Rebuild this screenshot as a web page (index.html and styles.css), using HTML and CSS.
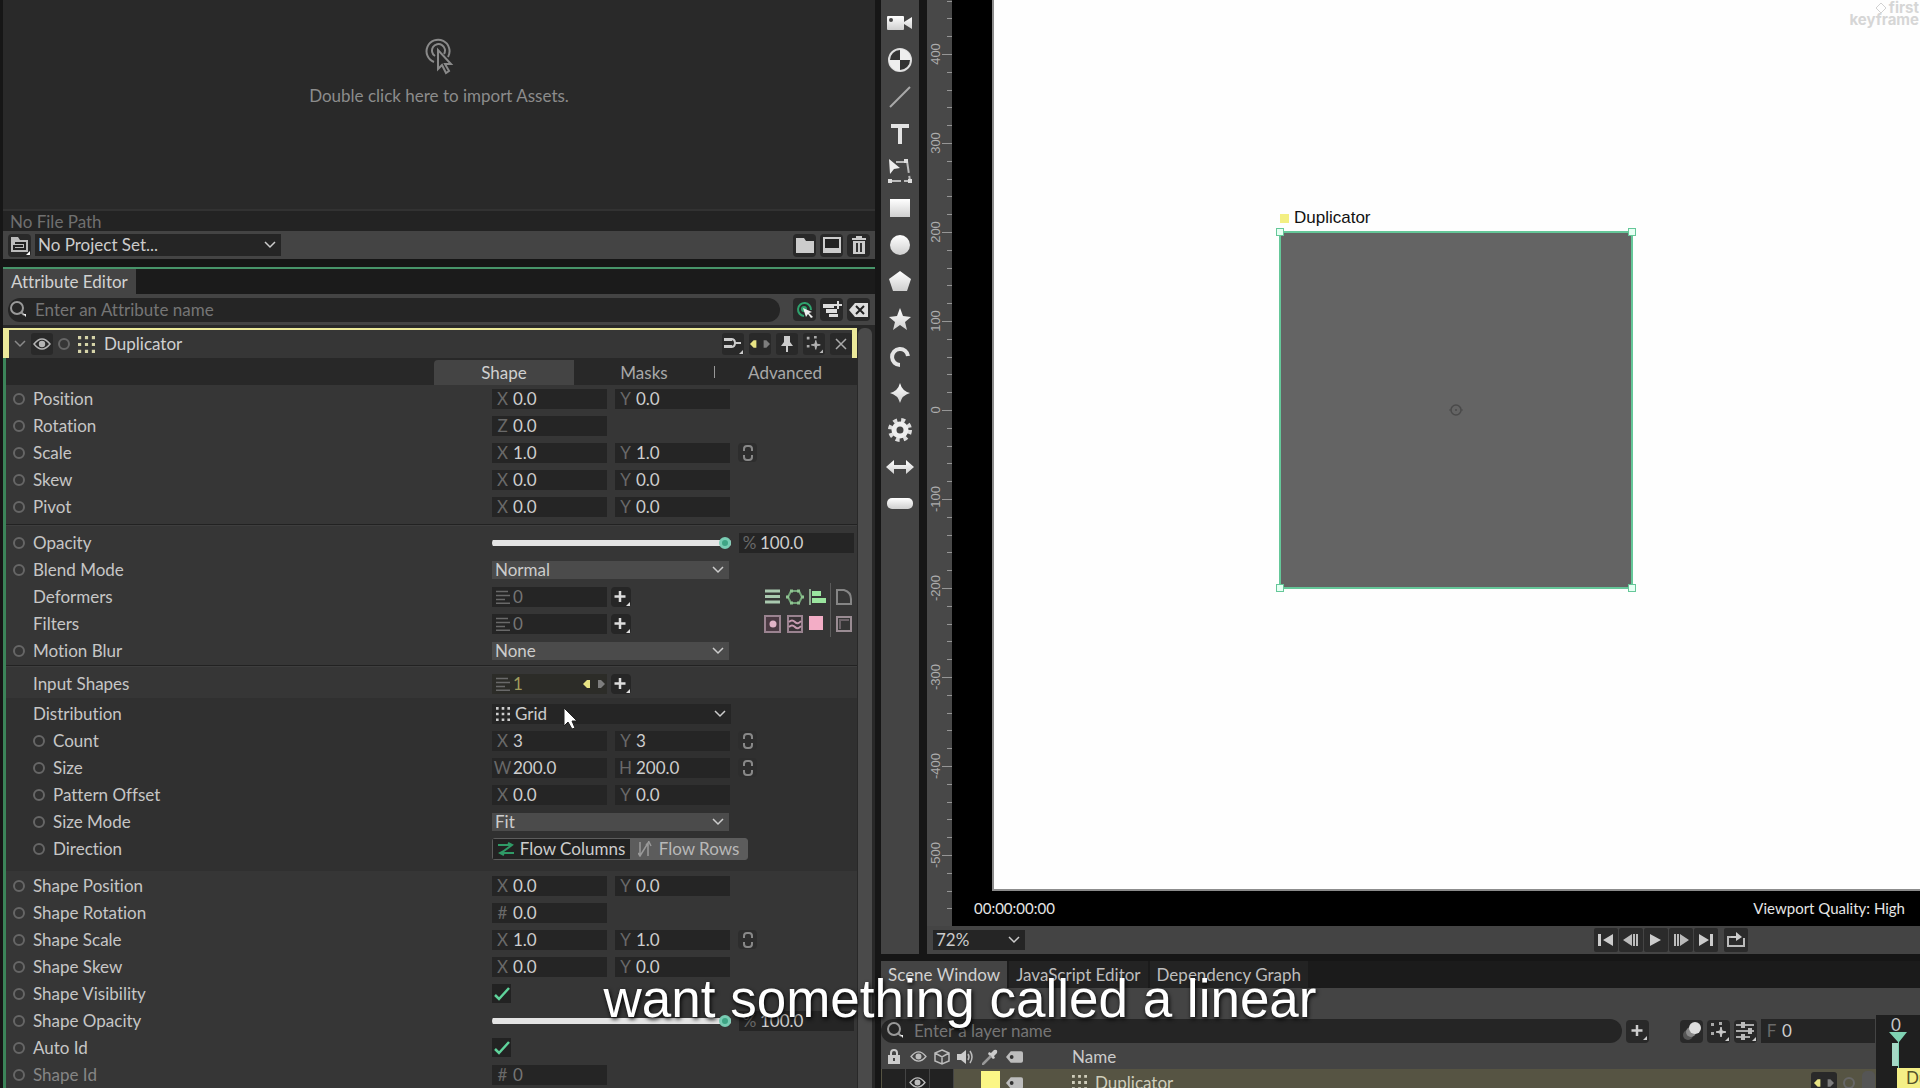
FILE: index.html
```html
<!DOCTYPE html>
<html lang="en">
<head>
<meta charset="utf-8">
<title>Attribute Editor</title>
<link rel="stylesheet" href="styles.css">
</head>
<body>
<svg class="defs" aria-hidden="true">
  <defs>
    <linearGradient id="shine" x1="0" y1="0" x2="0" y2="1"><stop offset="0" stop-color="#fff"/><stop offset="1" stop-color="#cfcfcf"/></linearGradient>
  </defs>
  <symbol id="search" viewBox="0 0 20 20"><circle cx="8" cy="8" r="6" fill="none" stroke="currentColor" stroke-width="2"/><path d="M12 12l3 3" stroke="currentColor" stroke-width="2"/><path d="M14 14h3v3z" fill="#eee"/></symbol>
  <symbol id="plus" viewBox="0 0 20 20"><path d="M9 4v11M3.500 9.500h11" stroke="currentColor" stroke-width="2.500"/><path d="M19 15v4h-4z" fill="currentColor"/></symbol>
  <symbol id="chev" viewBox="0 0 12 8"><path d="M1 1l5 5 5-5" fill="none" stroke="currentColor" stroke-width="1.500"/></symbol>
  <symbol id="eye" viewBox="0 0 18 14"><path d="M1 7Q9-3 17 7Q9 17 1 7z" fill="none" stroke="currentColor" stroke-width="1.500"/><circle cx="9" cy="7" r="3.200" fill="currentColor"/></symbol>
  <symbol id="dots" viewBox="0 0 16 16"><path d="M0 0h3v3H0zM6.500 0h3v3h-3zM13 0h3v3h-3zM0 6.500h3v3H0zM6.500 6.500h3v3h-3zM13 6.500h3v3h-3zM0 13h3v3H0zM6.500 13h3v3h-3zM13 13h3v3h-3z" fill="currentColor"/></symbol>
  <symbol id="list" viewBox="0 0 14 14"><path d="M0 1.500h12M0 5.500h14M0 9.500h9M0 13.200h14" stroke="currentColor" stroke-width="1.400"/></symbol>
  <symbol id="link" viewBox="0 0 10 16"><path d="M1 6V4a3 3 0 0 1 3-3h2a3 3 0 0 1 3 3v2M1 10v2a3 3 0 0 0 3 3h2a3 3 0 0 0 3-3v-2" fill="none" stroke="currentColor" stroke-width="2"/></symbol>
  <symbol id="io" viewBox="0 0 22 10"><path d="M0 5l4-4h3v8H4z" fill="#e8e384"/><path d="M22 5l-4-4h-3v8h3z" fill="#7d7d7d"/></symbol>
  <symbol id="tag" viewBox="0 0 18 12"><path d="M5 0h11q2 0 2 2v8q0 2-2 2H5L0 6z" fill="currentColor"/><circle cx="6" cy="6" r="2" fill="#333"/></symbol>
  <symbol id="scatter" viewBox="0 0 20 20"><path d="M2 2h3v3H2zM10 1h3v3h-3zM2 11h3v3H2z" fill="#aaa"/><path d="M12 6l1 4 4 1-4 1-1 4-1-4-4-1 4-1z" fill="currentColor" stroke="currentColor"/><path d="M20 16v4h-4z" fill="currentColor"/></symbol>
</svg>
<div class="app">
  <aside class="side">
    <section class="assets">
      <button class="drop">
        <svg width="30" height="38" viewBox="0 0 30 38" fill="none" stroke="#8a8a8a" stroke-width="2"><path d="M10 24A11.500 11.500 0 1 1 24 19M11 18a6.500 6.500 0 1 1 9-2"/><path d="M14 12v19l4-4 4 8 3-2-4-7h6z" fill="#292929"/></svg>
        <span>Double click here to import Assets.</span>
      </button>
      <div class="path">No File Path</div>
      <div class="bar">
        <button class="ib" aria-label="Project"><svg width="20" height="20" viewBox="0 0 20 20"><path d="M1 2h7l2 3h8v12H1z" fill="#bbb"/><path d="M5 8h10v6H4v-3h9" fill="none" stroke="#222" stroke-width="2"/><path d="M20 16v4h-4z" fill="#fff"/></svg></button>
        <div class="sel wide"><select aria-label="Project set"><option>No Project Set...</option></select><svg width="12" height="8"><use href="#chev"/></svg></div>
        <span class="grow"></span>
        <button class="ib" aria-label="Folder"><svg width="20" height="18" viewBox="0 0 20 18"><path d="M1 2h8l2 3h8v12H1z" fill="#ccc"/></svg></button>
        <button class="ib" aria-label="Composition"><svg width="20" height="18" viewBox="0 0 20 18"><path d="M2 2h16v14H2z" fill="#222" stroke="#ccc" stroke-width="2"/><path d="M2 12h16v4H2z" fill="#ccc"/></svg></button>
        <button class="ib" aria-label="Delete"><svg width="16" height="20" viewBox="0 0 16 20"><path d="M1 3h14v2H1zM5 1h6v2H5zM2 6h12v13H2z" fill="#ccc"/><path d="M6 8v9M10 8v9" stroke="#333" stroke-width="2"/></svg></button>
      </div>
    </section>

    <section class="attrs">
      <div class="tabs top"><button class="tab on">Attribute Editor</button></div>
      <div class="bar find">
        <label class="search"><svg width="20" height="20"><use href="#search"/></svg><input type="text" aria-label="Attribute name" placeholder="Enter an Attribute name"></label>
        <button class="ib" aria-label="Follow selection"><svg width="20" height="20" viewBox="0 0 20 20"><path d="M9 16a6.500 6.500 0 1 1 7-6" fill="none" stroke="#2fa36e" stroke-width="2"/><circle cx="9" cy="9" r="3" fill="#2fa36e"/><path d="M8 8l9 4-3 1 4 4-2 1-3-4-2 3z" fill="#eee"/></svg></button>
        <button class="ib" aria-label="Add to list"><svg width="20" height="18" viewBox="0 0 20 18"><path d="M1 3h11v4H1zM4 8h11v4H4zM7 13h9v3H7z" fill="#ddd"/><path d="M16 0v8M12 4h8" stroke="#ddd" stroke-width="2"/></svg></button>
        <button class="ib" aria-label="Clear"><svg width="20" height="16" viewBox="0 0 20 16"><path d="M6 1h13v14H6L0 8z" fill="#ddd"/><path d="M7 4l8 8M15 4l-8 8" stroke="#222" stroke-width="2"/></svg></button>
      </div>
      <div class="scroller">
        <div class="sheet">
          <header class="head">
            <button class="bare" aria-label="Collapse"><svg class="dim" width="12" height="8"><use href="#chev"/></svg></button>
            <button class="mini" aria-label="Visible"><svg width="18" height="14"><use href="#eye"/></svg></button>
            <button class="ring" aria-label="Keyframe"></button>
            <svg class="cream" width="17" height="17"><use href="#dots"/></svg>
            <h2>Duplicator</h2>
            <span class="grow"></span>
            <button class="mini" aria-label="Presets"><svg width="20" height="20" viewBox="0 0 20 20"><path d="M1 5.500h8M1 12.500h8" stroke="#ccc" stroke-width="3"/><path d="M8 5q4 0 4 4t-4 4M12 9h6" fill="none" stroke="#ccc" stroke-width="2"/><path d="M20 16v4h-4z" fill="#ccc"/></svg></button>
            <button class="mini" aria-label="Connections"><svg width="20" height="10"><use href="#io"/></svg></button>
            <button class="mini" aria-label="Pin"><svg width="14" height="18" viewBox="0 0 14 18"><path d="M4 1h6v6l3 4H1l3-4zM6 11h2v6H6z" fill="#ccc"/></svg></button>
            <button class="mini" aria-label="Scatter"><svg width="18" height="18"><use href="#scatter"/></svg></button>
            <button class="mini" aria-label="Close"><svg width="14" height="14" viewBox="0 0 14 14"><path d="M2 2l10 10M12 2L2 12" stroke="#aaa" stroke-width="1.500"/></svg></button>
          </header>
          <nav class="subtabs"><button class="on">Shape</button><button>Masks</button><i></i><button>Advanced</button></nav>

          <div class="group first">
            <div class="row"><div class="name"><button class="ring" aria-label="Key"></button>Position</div><label class="f"><span>X</span><input value="0.0"></label><label class="f"><span>Y</span><input value="0.0"></label></div>
            <div class="row"><div class="name"><button class="ring" aria-label="Key"></button>Rotation</div><label class="f"><span>Z</span><input value="0.0"></label></div>
            <div class="row"><div class="name"><button class="ring" aria-label="Key"></button>Scale</div><label class="f"><span>X</span><input value="1.0"></label><label class="f"><span>Y</span><input value="1.0"></label><button class="lk" aria-label="Link"><svg width="10" height="16"><use href="#link"/></svg></button></div>
            <div class="row"><div class="name"><button class="ring" aria-label="Key"></button>Skew</div><label class="f"><span>X</span><input value="0.0"></label><label class="f"><span>Y</span><input value="0.0"></label></div>
            <div class="row"><div class="name"><button class="ring" aria-label="Key"></button>Pivot</div><label class="f"><span>X</span><input value="0.0"></label><label class="f"><span>Y</span><input value="0.0"></label></div>
          </div>

          <div class="group line">
            <div class="row"><div class="name"><button class="ring" aria-label="Key"></button>Opacity</div><input class="slider" type="range" aria-label="Opacity" value="100"><label class="f"><span>%</span><input value="100.0"></label></div>
            <div class="row"><div class="name"><button class="ring" aria-label="Key"></button>Blend Mode</div><div class="sel lite"><select aria-label="Blend Mode"><option>Normal</option></select><svg width="12" height="8"><use href="#chev"/></svg></div></div>
            <div class="row"><div class="name bareName">Deformers</div><label class="f off"><span><svg width="14" height="14"><use href="#list"/></svg></span><input value="0"></label><button class="add" aria-label="Add deformer"><svg width="20" height="20"><use href="#plus"/></svg></button>
              <div class="quick">
                <button aria-label="Lines"><svg width="18" height="18" viewBox="0 0 18 18"><path d="M1 3h15M1 8.500h15M1 14h15" stroke="#a9c9af" stroke-width="3"/></svg></button>
                <button aria-label="Hexagon"><svg width="18" height="18" viewBox="0 0 18 18"><path d="M5 3h8l3 6-3 6H5L2 9z" fill="none" stroke="#72a377" stroke-width="2"/><path d="M4 3h3M11 3h3M15 9h3M11 15h3M4 15h3M0 9h3" stroke="#8fc592" stroke-width="3"/></svg></button>
                <button aria-label="Align"><svg width="18" height="18" viewBox="0 0 18 18"><path d="M2 1v16" stroke="#8aa78d" stroke-width="2"/><path d="M4 3h9v5H4zM4 10h14v5H4z" fill="#9be59f"/></svg></button>
                <i></i>
                <button aria-label="Bend"><svg width="18" height="18" viewBox="0 0 18 18"><path d="M2 16V2h7q7 2 7 9v5z" fill="none" stroke="#858585" stroke-width="2"/></svg></button>
              </div></div>
            <div class="row"><div class="name bareName">Filters</div><label class="f off"><span><svg width="14" height="14"><use href="#list"/></svg></span><input value="0"></label><button class="add" aria-label="Add filter"><svg width="20" height="20"><use href="#plus"/></svg></button>
              <div class="quick">
                <button aria-label="Glow"><svg width="18" height="18" viewBox="0 0 18 18"><path d="M1 1h15v16H1z" fill="#4b3a43" stroke="#9a8390" stroke-width="2"/><circle cx="9" cy="9" r="3.500" fill="#e3b4c8"/></svg></button>
                <button aria-label="Distort"><svg width="18" height="18" viewBox="0 0 18 18"><path d="M2 1h14v16H2z" fill="#3a3337" stroke="#9a8390" stroke-width="2"/><path d="M3 7q3-3 6 0t6-1M3 12q3-3 6 0t6-1" fill="none" stroke="#c79bb0" stroke-width="2"/></svg></button>
                <button aria-label="Fill"><svg width="18" height="18" viewBox="0 0 18 18"><path d="M1 1h14v14H1z" fill="#f3adc6"/></svg></button>
                <i></i>
                <button aria-label="Frame"><svg width="18" height="18" viewBox="0 0 18 18"><path d="M2 2h14v14H2z" fill="none" stroke="#9a8c93" stroke-width="2"/><path d="M4 5h10M5 4v10" stroke="#6b6267" stroke-width="2"/></svg></button>
              </div></div>
            <div class="row"><div class="name"><button class="ring" aria-label="Key"></button>Motion Blur</div><div class="sel lite"><select aria-label="Motion Blur"><option>None</option></select><svg width="12" height="8"><use href="#chev"/></svg></div></div>
          </div>

          <div class="group line">
            <div class="row"><div class="name bareName">Input Shapes</div><label class="f gold"><span><svg width="14" height="14"><use href="#list"/></svg></span><input value="1"><svg class="io" width="22" height="10"><use href="#io"/></svg></label><button class="add" aria-label="Add input shape"><svg width="20" height="20"><use href="#plus"/></svg></button></div>
          </div>

          <div class="group dark">
            <div class="row"><div class="name bareName">Distribution</div><div class="sel grid"><svg width="14" height="14"><use href="#dots"/></svg><select aria-label="Distribution"><option>Grid</option></select><svg width="12" height="8"><use href="#chev"/></svg></div></div>
            <div class="row"><div class="name sub"><button class="ring" aria-label="Key"></button>Count</div><label class="f"><span>X</span><input value="3"></label><label class="f"><span>Y</span><input value="3"></label><button class="lk" aria-label="Link"><svg width="10" height="16"><use href="#link"/></svg></button></div>
            <div class="row"><div class="name sub"><button class="ring" aria-label="Key"></button>Size</div><label class="f"><span>W</span><input value="200.0"></label><label class="f"><span>H</span><input value="200.0"></label><button class="lk" aria-label="Link"><svg width="10" height="16"><use href="#link"/></svg></button></div>
            <div class="row"><div class="name sub"><button class="ring" aria-label="Key"></button>Pattern Offset</div><label class="f"><span>X</span><input value="0.0"></label><label class="f"><span>Y</span><input value="0.0"></label></div>
            <div class="row"><div class="name sub"><button class="ring" aria-label="Key"></button>Size Mode</div><div class="sel lite"><select aria-label="Size Mode"><option>Fit</option></select><svg width="12" height="8"><use href="#chev"/></svg></div></div>
            <div class="row"><div class="name sub"><button class="ring" aria-label="Key"></button>Direction</div><div class="seg">
              <button class="on"><svg width="16" height="14" viewBox="0 0 16 14"><path d="M0 3h13M10 1l4 2-11 8M16 11H3M6 9l-4 2 4 2" fill="none" stroke="#2f9a66" stroke-width="2"/></svg>Flow Columns</button>
              <button><svg width="14" height="16" viewBox="0 0 14 16"><path d="M2 1v13M0 12l2 3L10 2v13M8 4l3-3 2 4" fill="none" stroke="#999" stroke-width="1.500"/></svg>Flow Rows</button></div></div>
          </div>

          <div class="group">
            <div class="row"><div class="name"><button class="ring" aria-label="Key"></button>Shape Position</div><label class="f"><span>X</span><input value="0.0"></label><label class="f"><span>Y</span><input value="0.0"></label></div>
            <div class="row"><div class="name"><button class="ring" aria-label="Key"></button>Shape Rotation</div><label class="f"><span>#</span><input value="0.0"></label></div>
            <div class="row"><div class="name"><button class="ring" aria-label="Key"></button>Shape Scale</div><label class="f"><span>X</span><input value="1.0"></label><label class="f"><span>Y</span><input value="1.0"></label><button class="lk" aria-label="Link"><svg width="10" height="16"><use href="#link"/></svg></button></div>
            <div class="row"><div class="name"><button class="ring" aria-label="Key"></button>Shape Skew</div><label class="f"><span>X</span><input value="0.0"></label><label class="f"><span>Y</span><input value="0.0"></label></div>
            <div class="row"><div class="name"><button class="ring" aria-label="Key"></button><label for="vis">Shape Visibility</label></div><span class="check"><input type="checkbox" id="vis" checked><svg width="16" height="14" viewBox="0 0 16 14"><path d="M1 8l4 4L15 1" fill="none" stroke="#5fd39b" stroke-width="2.500"/></svg></span></div>
            <div class="row"><div class="name"><button class="ring" aria-label="Key"></button>Shape Opacity</div><input class="slider" type="range" aria-label="Shape Opacity" value="100"><label class="f"><span>%</span><input value="100.0"></label></div>
            <div class="row"><div class="name"><button class="ring" aria-label="Key"></button><label for="auto">Auto Id</label></div><span class="check"><input type="checkbox" id="auto" checked><svg width="16" height="14" viewBox="0 0 16 14"><path d="M1 8l4 4L15 1" fill="none" stroke="#5fd39b" stroke-width="2.500"/></svg></span></div>
            <div class="row faded"><div class="name"><button class="ring" aria-label="Key"></button>Shape Id</div><label class="f off"><span>#</span><input value="0"></label></div>
          </div>
        </div>
        <div class="thumb"></div>
      </div>
    </section>
  </aside>

  <main class="main">
    <div class="work">
      <div class="tools">
        <button aria-label="Camera"><svg width="28" height="20" viewBox="0 0 28 20"><path d="M1 4q0-1 1-1h15q1 0 1 1v12q0 1-1 1H2q-1 0-1-1zM18 9l8-5v12l-8-5z" fill="url(#shine)"/><circle cx="5" cy="7" r="2" fill="#444"/></svg></button>
        <button aria-label="Null"><svg width="26" height="26" viewBox="0 0 26 26"><circle cx="13" cy="13" r="11" fill="#333" stroke="#ddd" stroke-width="2"/><path d="M13 2a11 11 0 0 1 11 11H13zM13 13v11A11 11 0 0 1 2 13z" fill="#eee"/></svg></button>
        <button aria-label="Line"><svg width="24" height="24" viewBox="0 0 24 24"><path d="M2 22L22 2" stroke="#aaa" stroke-width="2"/></svg></button>
        <button aria-label="Text tool"><svg width="24" height="24" viewBox="0 0 24 24"><path d="M3 4h18M12 4v18" stroke="#e4e4e4" stroke-width="4"/></svg></button>
        <button aria-label="Edit shape"><svg width="26" height="26" viewBox="0 0 26 26"><path d="M2 23h22M20 3l3 20M9 4h10" fill="none" stroke="#bbb" stroke-width="2" stroke-dasharray="12 3"/><path d="M2 1l11 9-6 1-4 5z" fill="#eee"/><path d="M1 21h4v4H1zM21 21h4v4h-4zM17 1h4v4h-4z" fill="#ddd"/></svg></button>
        <button aria-label="Rectangle"><svg width="24" height="24" viewBox="0 0 24 24"><path d="M2 3h20v18H2z" fill="url(#shine)"/></svg></button>
        <button aria-label="Ellipse"><svg width="24" height="24"><circle cx="12" cy="12" r="10" fill="url(#shine)"/></svg></button>
        <button aria-label="Polygon"><svg width="24" height="24" viewBox="0 0 24 24"><path d="M12 1l11 8-4 12H5L1 9z" fill="url(#shine)"/></svg></button>
        <button aria-label="Star"><svg width="24" height="24" viewBox="0 0 24 24"><path d="M12 1l3 8 8 1-6 5 2 8-7-5-7 5 2-8-6-5 8-1z" fill="url(#shine)"/></svg></button>
        <button aria-label="Arc"><svg width="24" height="24" viewBox="0 0 24 24"><path d="M12 21A8 8 0 1 1 20 12" fill="none" stroke="#e4e4e4" stroke-width="4"/></svg></button>
        <button aria-label="Super ellipse"><svg width="24" height="24" viewBox="0 0 24 24"><path d="M12 2q2 8 10 10-8 2-10 10-2-8-10-10 8-2 10-10z" fill="url(#shine)"/></svg></button>
        <button aria-label="Cog"><svg width="26" height="26" viewBox="0 0 26 26"><circle cx="13" cy="13" r="10" fill="none" stroke="#ddd" stroke-width="4" stroke-dasharray="4 4"/><circle cx="13" cy="13" r="6" fill="none" stroke="#eee" stroke-width="5"/></svg></button>
        <button aria-label="Arrow"><svg width="28" height="16" viewBox="0 0 28 16"><path d="M0 8l8-7v5h12V1l8 7-8 7v-5H8v5z" fill="url(#shine)"/></svg></button>
        <button aria-label="Capsule"><svg width="28" height="14" viewBox="0 0 28 14"><rect x="1" y="1" width="26" height="11" rx="5" fill="url(#shine)"/></svg></button>
      </div>
      <div class="viewcol">
        <div class="view">
          <svg class="ruler" aria-hidden="true">
            <defs><pattern id="ticks" width="25" height="89" y="50" patternUnits="userSpaceOnUse"><path d="M15 4.500h10M20 22.500h5M20 40.500h5M20 57.500h5M20 75.500h5" stroke="#969696"/></pattern></defs>
            <rect width="25" height="100%" fill="url(#ticks)"/>
            <g>
              <text transform="translate(13 54) rotate(-90)">400</text>
              <text transform="translate(13 143) rotate(-90)">300</text>
              <text transform="translate(13 232) rotate(-90)">200</text>
              <text transform="translate(13 321) rotate(-90)">100</text>
              <text transform="translate(13 410) rotate(-90)">0</text>
              <text transform="translate(13 499) rotate(-90)">-100</text>
              <text transform="translate(13 588) rotate(-90)">-200</text>
              <text transform="translate(13 677) rotate(-90)">-300</text>
              <text transform="translate(13 766) rotate(-90)">-400</text>
              <text transform="translate(13 855) rotate(-90)">-500</text>
            </g>
          </svg>
          <div class="stage">
            <div class="canvas">
              <div class="brand"><span><svg width="12" height="12" viewBox="0 0 12 12"><path d="M6 1l5 5-5 5-5-5z" fill="none" stroke="#d2d2d2"/></svg>first</span><span>keyframe</span></div>
              <div class="tagline"><i></i>Duplicator</div>
              <div class="shape"><b></b><b></b><b></b><b></b>
                <svg width="14" height="14" viewBox="0 0 14 14"><circle cx="7" cy="7" r="5" fill="none" stroke="#4a4a4a" stroke-width="1.500"/><circle cx="7" cy="7" r="1" fill="#4a4a4a"/><path d="M0 7h2M12 7h2" stroke="#4a4a4a"/></svg>
              </div>
            </div>
            <div class="status"><span>00:00:00:00</span><span>Viewport Quality: High</span></div>
          </div>
        </div>
        <div class="transport">
          <div class="sel zoom"><select aria-label="Zoom"><option>72%</option></select><svg width="12" height="8"><use href="#chev"/></svg></div>
          <div class="play">
            <button aria-label="First frame"><svg width="16" height="14" viewBox="0 0 16 14"><path d="M0 1h3v12H0zM15 1v12L5 7z" fill="#ccc"/></svg></button>
            <button aria-label="Previous frame"><svg width="16" height="14" viewBox="0 0 16 14"><path d="M9 1v12L0 7zM10 1h2v12h-2zM13 1h2v12h-2z" fill="#bbb"/></svg></button>
            <button aria-label="Play"><svg width="16" height="14" viewBox="0 0 16 14"><path d="M2 1v12l11-6z" fill="#ccc"/></svg></button>
            <button aria-label="Next frame"><svg width="16" height="14" viewBox="0 0 16 14"><path d="M7 1v12l9-6zM1 1h2v12H1zM4 1h2v12H4z" fill="#bbb"/></svg></button>
            <button aria-label="Last frame"><svg width="16" height="14" viewBox="0 0 16 14"><path d="M12 1h3v12h-3zM1 1v12l10-6z" fill="#ccc"/></svg></button>
            <button class="loop" aria-label="Loop"><svg width="20" height="16" viewBox="0 0 20 16"><path d="M6 5H2v9h16V6" fill="none" stroke="#bbb" stroke-width="2"/><path d="M5 4h5V0l6 5-6 4V6H5z" fill="#ccc"/></svg></button>
          </div>
        </div>
      </div>
    </div>

    <section class="scene">
      <div class="tabs"><button class="tab on">Scene Window</button><button class="tab">JavaScript Editor</button><button class="tab">Dependency Graph</button></div>
      <div class="scenebody">
        <div class="layers">
          <div class="bar tall">
            <label class="search"><svg width="20" height="20"><use href="#search"/></svg><input type="text" aria-label="Layer name" placeholder="Enter a layer name"></label>
            <button class="ib" aria-label="Add layer"><svg width="20" height="20"><use href="#plus"/></svg></button>
            <span class="gap"></span>
            <button class="ib" aria-label="Motion blur"><svg width="20" height="20" viewBox="0 0 20 20"><circle cx="6" cy="14" r="5" fill="#555"/><circle cx="9" cy="11" r="5" fill="#888"/><circle cx="13" cy="7" r="6" fill="#ddd"/></svg></button>
            <button class="ib" aria-label="Scatter"><svg width="20" height="20"><use href="#scatter"/></svg></button>
            <button class="ib" aria-label="Filters"><svg width="20" height="20" viewBox="0 0 20 20"><path d="M0 4h18M0 10h18M0 16h14" stroke="#aaa" stroke-width="2"/><path d="M5 1h4v6H5zM12 7h4v6h-4zM5 13h4v6H5z" fill="#bbb"/><path d="M20 16v4h-4z" fill="#ccc"/></svg></button>
            <label class="f frame"><span>F</span><input value="0"></label>
          </div>
          <div class="cols">
            <span><svg width="12" height="15" viewBox="0 0 12 15"><path d="M3 7V4a3 3 0 0 1 6 0v3" fill="none" stroke="#ccc" stroke-width="2"/><path d="M0 6h12v9H0z" fill="#ccc"/><path d="M5 9h2v3H5z" fill="#444"/></svg></span>
            <span><svg width="17" height="13"><use href="#eye"/></svg></span>
            <span><svg width="16" height="16" viewBox="0 0 16 16"><path d="M8 1l7 3v8l-7 3-7-3V4zM1 4l7 4 7-4M8 8v7" fill="none" stroke="#bbb" stroke-width="1.500"/></svg></span>
            <span><svg width="18" height="14" viewBox="0 0 18 14"><path d="M0 4h4l5-4v14l-5-4H0z" fill="#ccc"/><path d="M11 4q2 3 0 6M13 1q4 6 0 12" fill="none" stroke="#bbb" stroke-width="1.500"/></svg></span>
            <span><svg width="16" height="16" viewBox="0 0 16 16"><path d="M9 4l3-3q4-1 3 3l-3 3 1 2-2 1-5-5 1-2z" fill="#ccc"/><path d="M9 7l-7 7-2 2" stroke="#999" stroke-width="2.500"/></svg></span>
            <span><svg width="17" height="12"><use href="#tag"/></svg></span>
            <strong>Name</strong>
          </div>
          <div class="layer">
            <span class="cell"></span><span class="cell"><svg width="17" height="13"><use href="#eye"/></svg></span><span class="cell"></span>
            <span></span><span><i class="swatch"></i></span><span><svg width="17" height="12"><use href="#tag"/></svg></span>
            <strong><svg width="15" height="15"><use href="#dots"/></svg>Duplicator</strong>
            <button class="mini conn" aria-label="Connections"><svg width="20" height="10"><use href="#io"/></svg></button>
            <button class="ring" aria-label="Key"></button>
            <span class="vthumb"></span>
          </div>
        </div>
        <div class="timeline">
          <span class="num">0</span>
          <svg width="18" height="36" viewBox="0 0 18 36"><path d="M0 0h18L10 10v26H9V10z" fill="#7fd2b3"/><path d="M3 11h6v23H3z" fill="#a5d9c6"/></svg>
          <div class="clip">Duplicator</div>
        </div>
      </div>
    </section>
  </main>
</div>
<svg class="pointer" width="14" height="24" viewBox="0 0 14 24"><path d="M1 1v18l4-4 4 7 3-1-3-7h5z" fill="#fff" stroke="#222"/></svg>
<p class="caption">want something called a linear</p>
</body>
</html>
```
FILE: styles.css
```css
* { box-sizing: border-box; }
body {
  margin: 0;
  background: #161616;
  color: #c6c6c6;
  font: 17px/20px Lato, "Open Sans", sans-serif;
  font-variant-ligatures: none;
  overflow: hidden;
}
button, input, select { font: inherit; font-variant-ligatures: none; color: inherit; }
button { background: none; border: 0; padding: 0; margin: 0; display: flex; align-items: center; justify-content: center; }
svg { display: block; flex: none; }
.defs { position: absolute; width: 0; height: 0; }
.grow { flex: 1; }
.app { display: flex; height: 100vh; }

/* left column */
.side { width: 875px; flex: none; display: flex; flex-direction: column; padding-left: 3px; }
.assets { flex: none; background: #292929; }
.drop { width: 100%; height: 211px; flex-direction: column; gap: 10px; padding-bottom: 66px; color: #8c8c8c; border-bottom: 2px solid #323232; }
.path { height: 20px; padding-left: 7px; background: #232323; color: #707070; line-height: 22px; }
.bar { display: flex; align-items: center; gap: 4px; height: 28px; padding: 0 5px; background: #444; }
.ib { width: 23px; height: 23px; background: #292929; border-radius: 4px; flex: none; color: #ccc; }
.sel { display: flex; align-items: center; background: #252525; color: #ccc; padding-right: 5px; }
.sel select { flex: 1; min-width: 0; appearance: none; background: none; border: 0; padding: 0 0 0 3px; outline: 0; height: 100%; line-height: 18px; }
.sel.wide { width: 246px; height: 22px; }
.sel.lite { width: 237px; height: 18px; background: #4b4b4b; }
.sel.grid { width: 239px; height: 20px; padding-left: 4px; }
.sel.grid select { padding-left: 5px; }
.sel.zoom { width: 92px; height: 20px; }

.attrs { flex: 1; min-height: 0; display: flex; flex-direction: column; margin-top: 8px; border-top: 2px solid #479469; }
.tabs { display: flex; flex: none; height: 27px; background: #1b1b1b; }
.tab { padding: 0 7px; background: #232323; color: #bdbdbd; }
.tab + .tab { margin-left: 2px; }
.tabs.top { height: 25px; }
.tabs.top .tab { padding: 0 8px; }
.tab.on { background: #444; color: #d2d2d2; }
.search { flex: 1; display: flex; align-items: center; gap: 8px; height: 24px; padding-left: 5px; background: #252525; border-radius: 12px; color: #999; }
.search input { flex: 1; min-width: 0; border: 0; background: none; padding: 0; outline: 0; }
.search input::placeholder { color: #757575; opacity: 1; }
.find { height: 31px; }
.find .search { margin-right: 9px; padding-left: 1px; gap: 6px; }

.scroller { flex: 1; min-height: 0; display: flex; overflow: hidden; background: #282828; padding-top: 3px; }
.sheet { width: 854px; flex: none; align-self: flex-start; border-left: 3px solid #3c8459; }
.thumb { flex: 1; margin: 0 3px 0 1px; background: #4a4a4a; border-radius: 6px 6px 0 0; }
.head {
  display: flex; align-items: center; gap: 5px; height: 30px; margin-left: -3px; padding: 0 0 0 5px;
  background: #363636; border: solid #ece99a; border-width: 2px 5px 0 6px;
}
.head h2 { margin: 0 0 0 4px; font-size: 17px; font-weight: 400; color: #d0d0d0; }
.bare { width: 12px; }
.dim { color: #8a8a8a; }
.cream { color: #d5d3a8; margin-left: 3px; }
.mini { width: 22px; height: 22px; background: #292929; border-radius: 3px; color: #b5b5b5; }
.ring { width: 12px; height: 12px; flex: none; border: 2px solid #666; border-radius: 50%; }
.subtabs { display: flex; justify-content: flex-end; align-items: flex-end; height: 27px; padding-right: 2px; background: #282828; color: #a8a8a8; }
.subtabs button { width: 140px; height: 25px; }
.subtabs .on { background: #444; color: #d0d0d0; border-radius: 4px 0 0 0; }
.subtabs i { width: 1px; height: 12px; align-self: center; background: #999; }

.group { background: #363636; padding: 1px 0 3px; }
.group.first { padding: 0 0 4px; }
.group.line { border-top: 1px solid #222; box-shadow: inset 0 1px #3e3e3e; padding: 4px 0 1px; }
.group.dark { background: #303030; padding: 2px 0 9px; }
.row { display: flex; align-items: center; gap: 8px; height: 27px; }
.name { width: 486px; flex: none; display: flex; align-items: center; gap: 8px; padding-left: 7px; margin-right: -8px; }
.name.bareName, .name.sub { padding-left: 27px; }
.f { display: flex; align-items: center; width: 115px; height: 20px; flex: none; background: #252525; color: #cecece; }
.f span { width: 21px; flex: none; display: flex; justify-content: center; color: #696969; }
.f input { flex: 1; min-width: 0; width: 20px; background: none; border: 0; padding: 0; outline: 0; height: 20px; }
.f.off { color: #757575; }
.f.gold { color: #a09c5c; background: #2c2c28; }
.io { margin-right: 2px; }
.lk { width: 19px; height: 19px; background: #2d2d2d; border-radius: 4px; color: #888; }
.add { width: 20px; height: 20px; margin-left: -4px; background: #262626; border-radius: 4px; color: #ddd; }
.quick { display: flex; align-items: center; align-self: stretch; gap: 4px; margin-left: auto; margin-right: 4px; }
.quick i { width: 1px; align-self: stretch; background: #5a5a5a; }
.slider { appearance: none; width: 239px; height: 12px; margin: 0; background: linear-gradient(#e4e4e4, #e4e4e4) center / 100% 6px no-repeat; border-radius: 6px; }
.slider::-webkit-slider-thumb { appearance: none; width: 12px; height: 12px; border-radius: 50%; background: #3fa585; border: 3px solid #79cdb4; }
.seg { display: flex; height: 22px; border: 1px solid #5c5c5c; border-radius: 3px; background: #5c5c5c; color: #b8b8b8; }
.seg button { width: 117px; gap: 7px; white-space: nowrap; }
.seg .on { width: 137px; gap: 6px; background: #222; color: #ccc; }
.check { position: relative; display: grid; place-items: center; width: 19px; height: 19px; }
.check input { position: absolute; inset: 0; width: 19px; height: 19px; margin: 0; appearance: none; background: #222; }
.check svg { position: relative; }
.faded { color: #858585; }

/* right column */
.main { flex: 1; min-width: 0; display: flex; flex-direction: column; gap: 7px; padding-left: 6px; }
.work { flex: 1; min-height: 0; display: flex; gap: 8px; }
.tools { width: 38px; flex: none; display: flex; flex-direction: column; align-items: center; gap: 2px; padding-top: 5px; background: #444; }
.tools button { width: 38px; height: 35px; }
.viewcol { flex: 1; min-width: 0; display: flex; flex-direction: column; }
.view { flex: 1; display: flex; background: #000; }
.ruler { width: 25px; height: auto; align-self: stretch; background: #484848; }
.ruler text { font: 13px "Liberation Sans", Arial, sans-serif; fill: #adadad; text-anchor: middle; }
.stage { flex: 1; display: flex; flex-direction: column; }
.canvas { position: relative; flex: 1; margin-left: 40px; background: #fefefe; border: solid #8c8c8c; border-width: 0 0 2px 2px; }
.brand { position: absolute; top: 2px; right: 1px; display: flex; flex-direction: column; align-items: flex-end; font: 700 15px/12px Inter, sans-serif; color: #d6d6d6; }
.brand span { display: flex; align-items: center; gap: 2px; }
.tagline { position: absolute; left: 286px; top: 208px; display: flex; align-items: center; gap: 5px; font: 17px/20px "Liberation Sans", Arial, sans-serif; color: #111; }
.tagline i { width: 9px; height: 9px; background: #f3ef82; }
.shape { position: absolute; left: 285px; top: 231px; width: 354px; height: 358px; background: #646464; border: 2px solid #65c799; display: grid; place-items: center; }
.shape b { position: absolute; width: 8px; height: 8px; background: #e6fff3; border: 1px solid #65c799; }
.shape b:nth-of-type(odd) { left: -5px; }
.shape b:nth-of-type(even) { right: -5px; }
.shape b:nth-of-type(-n+2) { top: -5px; }
.shape b:nth-of-type(n+3) { bottom: -5px; }
.status { display: flex; justify-content: space-between; align-items: center; height: 35px; padding: 0 15px 2px 22px; font-size: 15px; color: #e6e6e6; }
.transport { display: flex; align-items: center; height: 28px; padding-left: 6px; background: #444; flex: none; }
.play { display: flex; gap: 1px; margin-left: auto; margin-right: 172px; }
.play button { width: 24px; height: 24px; background: #2b2b2b; border-radius: 2px; }
.play .loop { margin-left: 5px; }

.scene { height: 127px; flex: none; overflow: hidden; background: #1b1b1b; }
.scenebody { display: flex; background: #444; }
.layers { flex: 1; min-width: 0; padding-top: 30px; }
.bar.tall { height: 26px; padding: 0 1px 0 0; }
.tall .gap { width: 23px; }
.frame { width: 114px; height: 24px; }
.cols, .layer { display: flex; align-items: center; height: 25px; padding-left: 1px; color: #bdbdbd; }
.cols > span, .layer > span { width: 24px; display: flex; justify-content: center; flex: none; }
.cols strong { margin-left: 46px; font-weight: 400; color: #ccc; }
.layer { height: 27px; background: #565443; }
.layer .cell { height: 27px; align-items: center; background: #222; border-right: 1px solid #444; }
.layer strong { flex: 1; display: flex; align-items: center; gap: 8px; margin-left: 46px; font-weight: 400; color: #cfcdbb; }
.swatch { width: 19px; height: 23px; background: #fbf686; }
.conn { width: 26px; margin-right: 6px; }
.layer .vthumb { width: 13px; height: 24px; margin: 0 1px 0 7px; background: #555; border-radius: 5px; }
.timeline { width: 44px; flex: none; margin-top: 27px; padding-left: 13px; background: #1f1f1f; display: flex; flex-direction: column; overflow: hidden; }
.num { height: 17px; padding-left: 2px; line-height: 20px; }
.clip { width: 60px; margin-left: 8px; padding-left: 9px; background: #f4ef86; color: #55532a; }

.pointer { position: absolute; left: 563px; top: 707px; }
.caption { position: absolute; left: 0; right: 0; bottom: 59px; margin: 0; text-align: center; font: 53px/60px "Liberation Sans", Arial, sans-serif; color: #fff; text-shadow: 1px 2px 4px #000; }
```
